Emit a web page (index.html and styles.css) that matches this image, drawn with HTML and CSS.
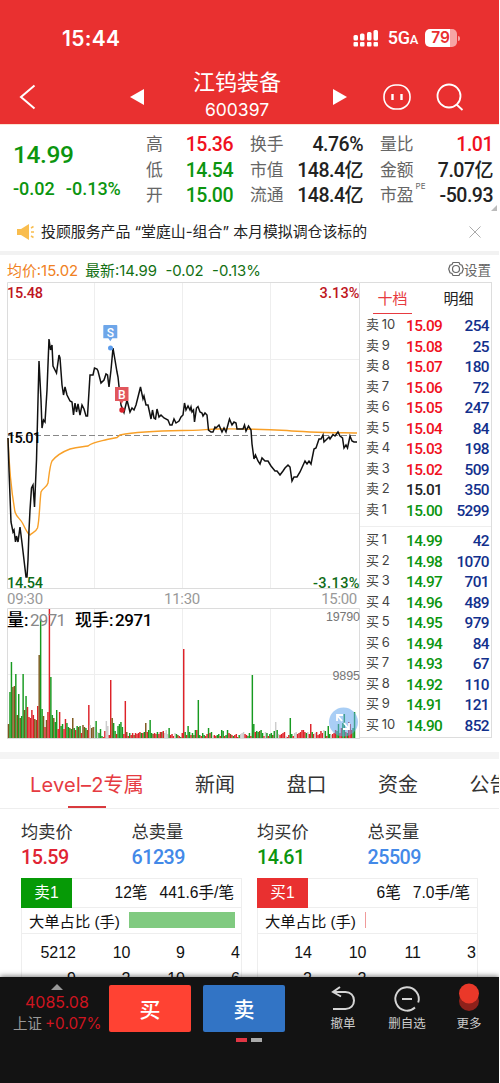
FILE: index.html
```html
<!DOCTYPE html>
<html lang="zh-CN">
<head>
  <meta charset="UTF-8">
  <meta name="viewport" content="width=device-width, initial-scale=1.0">
  <title>江钨装备 600397</title>
  <link rel="stylesheet" href="styles.css">
</head>
<body>
  <div class="app">
    <header class="header">
      <div class="status-bar">
        <span class="clock">15:44</span>
        <div class="status-icons">
          <svg width="26" height="18" viewBox="0 0 26 18" fill="#fff">
            <rect x="0.500" y="13" width="4.500" height="4.500" rx="1"/><rect x="7" y="13" width="4.500" height="4.500" rx="1"/>
            <rect x="14" y="13" width="4.500" height="4.500" rx="1"/><rect x="20.500" y="13" width="4.500" height="4.500" rx="1"/>
            <rect x="0.500" y="6" width="4.500" height="5.500" rx="1.5"/><rect x="7" y="4.500" width="4.500" height="7" rx="1.5"/>
            <rect x="14" y="3" width="4.500" height="8.500" rx="1.5"/><rect x="20.500" y="1" width="4.500" height="10.500" rx="1.5"/>
          </svg>
          <span class="network">5G<small>A</small></span>
          <span class="battery">79</span>
          <i class="battery-cap"></i>
        </div>
      </div>
      <div class="nav">
        <svg class="back" width="18" height="26" viewBox="0 0 18 26"><path d="M15.500 1.500 2 13l13.500 11.500" fill="none" stroke="#fff" stroke-width="2"/></svg>
        <svg class="prev" width="14" height="16" viewBox="0 0 14 16"><path d="M14 0v16L0 8z" fill="#fff"/></svg>
        <div class="stock">
          <h1>江钨装备</h1>
          <p>600397</p>
        </div>
        <svg class="next" width="14" height="16" viewBox="0 0 14 16"><path d="M0 0v16l14-8z" fill="#fff"/></svg>
        <svg class="robot" width="28" height="26" viewBox="0 0 28 26" fill="none" stroke="#fff">
          <rect x="1" y="1" width="26" height="24" rx="11.500" stroke-width="1.600"/>
          <path d="M9.500 10v6M18.500 10v6" stroke-width="2.400"/>
        </svg>
        <svg class="search" width="28" height="28" viewBox="0 0 28 28" fill="none" stroke="#fff" stroke-width="1.800">
          <circle cx="13" cy="13" r="11.500"/><path d="m20.500 21.500 6 5.500"/>
        </svg>
      </div>
    </header>

    <section class="quote">
      <div class="price">
        <strong>14.99</strong>
        <p><span>-0.02</span><span>-0.13%</span></p>
      </div>
      <dl class="col col-1">
        <div><dt>高</dt><dd class="red">15.36</dd></div>
        <div><dt>低</dt><dd class="green">14.54</dd></div>
        <div><dt>开</dt><dd class="green">15.00</dd></div>
      </dl>
      <dl class="col col-2">
        <div><dt>换手</dt><dd>4.76%</dd></div>
        <div><dt>市值</dt><dd>148.4<i>亿</i></dd></div>
        <div><dt>流通</dt><dd>148.4<i>亿</i></dd></div>
      </dl>
      <dl class="col col-3">
        <div><dt>量比</dt><dd class="red">1.01</dd></div>
        <div><dt>金额</dt><dd>7.07<i>亿</i></dd></div>
        <div><dt>市盈<sup>PE</sup></dt><dd>-50.93</dd></div>
      </dl>
      <span class="corner"></span>
    </section>

    <section class="notice">
      <svg width="18" height="16" viewBox="0 0 18 16">
        <path d="M0 5h4l8-5v16l-8-5H0z" fill="#f9bd4e"/>
        <path d="m14 4 2.500-1.500M14 8h3M14 12l2.500 1.500" stroke="#f9bd4e" stroke-width="1.500"/>
      </svg>
      <p>投顾服务产品 “堂庭山-组合” 本月模拟调仓该标的</p>
      <svg class="close" width="12" height="12" viewBox="0 0 12 12"><path d="m.5.5 11 11m0-11-11 11" stroke="#aaa"/></svg>
    </section>

    <div class="legend">
      <span class="avg">均价:15.02</span>
      <span class="last">最新:14.99&nbsp; -0.02&nbsp; -0.13%</span>
      <span class="setting">
        <svg width="16" height="16" viewBox="0 0 16 16" fill="none" stroke="#666" stroke-width="1.200">
          <path d="M5 1.500h6l1 2 2 .8L15.300 8 14 11.700l-2 .8-1 2H5l-1-2-2-.8L.7 8 2 4.300l2-.8z"/><circle cx="8" cy="8" r="3.500"/>
        </svg>设置
      </span>
    </div>

    <section class="market">
      <div class="charts">
        <svg class="price-chart" width="354" height="306" viewBox="6 282 354 306">
          <path class="frame" d="M7.500 588V282.500h352V588M7 588.500h353"/>
          <path class="grid" d="M94.500 283v305M182.500 283v305M270.500 283v305M8 359.500h351M8 513.500h351"/>
          <path class="middle" d="M8 435.500h351"/>
          <path class="avg-line" d="M8 438C9 465 12 495 15 512c2 6 5 6 8 12 3 6 4 9 7 11 2-2 6-3 7.500-7 2-8 2-24 3.500-36 2-5 5-3 7-9 1.500-12 2-18 4-22 4-5 10-9 18-12 8-2 12-2 18-3 5-4 14-5 19-6.500l10-2 3-2.500c10-2 30-4 62-4.500 15 0 23-1 35-1.500 30-.5 50 .5 70 1.500 20 2 40 2 70 2.500"/>
          <polyline class="price-line" points="8,438 9,470 11,522 13,532 14,530 15.500,542 16.500,536 18,542 20,527 22,543 24,560 26,577 27,577 28,560 29,530 30,510 31.500,488 33,485 34.500,507 36.500,460 38,400 39,361 41,400 42,428 43.500,420 45,422 47,390 49,339 50.500,350 52,345 53,366 56.500,373 59,355 60,358 62,385 63.500,395 65,387 67,395 70,401 72,402 73.500,415 75,403 76.500,412 78,404 80,415 82,405 84,409 86,416 87.500,416 90,375 93,375 94.500,368 97,369 98,371 101,383 104,380 106,374 107.500,375 109,387 111,370 113,348 115,360 117,372 118,377 121,405 124,412.500 127,400 130,412 132,408 134,410 136,405 138,397 140.500,387 143,399 144,396 146,405 148,405 151,419 152.500,410 154,418 155.500,419 157,409 159,417 161,415 164,418 168,420 170,425 172,425 174,419 176,423 179,421 181,417 183,415 184.500,403 186,410 188,406 190,410 191,407 192,412 193.500,410 194.500,422 196.500,408 198,406.500 200,412 202,413 203,416 205,413 207,415 208.500,430 211,432 213,432 215,427 216,428 219,425 222,432 224,428 226,432 229.500,419 232,425 234,422 236,423 237,429 243,429 244.500,425 246,431 248.500,426 251,430 252,444 254,459 255.500,455 258,461 260,464 262,458 265,461 268,461 271,466 275,471 277,471 280,475 283,471 285,468 288,465 290,467 292,481 294,477 297,477 300,472 305,461 307,464 309,461 311,464 314,449 316,448 319,439 321,439 323,435 324,442 327,439 329,437 330,439 333,434.500 335,436 338,432 340,436 342.500,438 344,448 346,445 347.500,448 350,436 352,441 354,442 357,442"/>
          <text class="label red-dark" x="7" y="297.500" textLength="36">15.48</text>
          <text class="label red-dark" x="319.500" y="297.500" textLength="40">3.13%</text>
          <text class="label" x="7" y="442.500" textLength="34">15.01</text>
          <text class="label green-dark" x="7" y="587.500" textLength="36">14.54</text>
          <text class="label green-dark" x="313" y="587.500" textLength="46.500">-3.13%</text>
          <!-- trade markers -->
          <path d="M104 325h12.500q.8 0 .8.8v12.500h-5l-2 3-2-3h-5v-12.500q0-.8.7-.8z" fill="#6ea6e9"/>
          <text class="mark" x="110.300" y="336.500">S</text>
          <circle cx="110.500" cy="348" r="2.500" fill="#5b9cec"/>
          <path d="M115 387h13.500v14h-5l-2 3-2-3H115z" fill="#e1565c"/>
          <text class="mark" x="121.800" y="398.500">B</text>
          <circle cx="122" cy="410" r="2.700" fill="#d9222c"/>
        </svg>
        <div class="times"><span>09:30</span><span>11:30</span><span>15:00</span></div>
        <svg class="volume-chart" width="354" height="131" viewBox="6 608 354 131">
          <path class="frame" d="M7.500 738V608.500h352V738M7 738.500h353"/>
          <path class="grid" d="M94.500 609v129M182.500 609v129M270.500 609v129M8 674.500h351"/>
          <g id="volumeBars"></g>
          <text class="vol-text" x="7" y="626">量:</text>
          <text class="vol-text vol-gray" x="30" y="626" textLength="36">2971</text>
          <text class="vol-text" x="75" y="626">现手:</text>
          <text class="vol-text" x="115" y="626" textLength="37.500">2971</text>
          <text class="scale" x="326" y="621" textLength="34">19790</text>
          <text class="scale" x="332.500" y="680" textLength="27.500">9895</text>
          <circle cx="343.500" cy="722" r="14.500" fill="#62a5ed" opacity=".55"/>
          <path d="M342 721l-5-6m0 6v-6h6M344 723l5 6m0-6v6h-6" fill="none" stroke="#fff" stroke-width="1.800"/>
        </svg>
      </div>
      <div class="book">
        <div class="book-tabs"><span class="active">十档</span><span>明细</span></div>
        <div class="levels" id="sells"></div>
        <div class="levels buys" id="buys"></div>
      </div>
    </section>

    <nav class="tabs">
      <span class="active">Level–2专属</span>
      <span>新闻</span>
      <span>盘口</span>
      <span>资金</span>
      <span>公告</span>
    </nav>

    <main class="level2">
      <div class="side">
        <div class="totals">
          <div><p>均卖价</p><b class="crimson">15.59</b></div>
          <div><p>总卖量</p><b class="blue">61239</b></div>
        </div>
        <div class="card">
          <div class="card-head"><span class="tag tag-sell">卖1</span><span>12笔</span><span class="per">441.6手/笔</span></div>
          <div class="ratio">大单占比 (手)<i class="bar bar-sell"></i></div>
          <div class="queue">
            <span>5212</span><span>10</span><span>9</span><span>4</span>
            <span>9</span><span>2</span><span>10</span><span>6</span>
          </div>
        </div>
      </div>
      <div class="side">
        <div class="totals">
          <div><p>均买价</p><b class="green">14.61</b></div>
          <div><p>总买量</p><b class="blue">25509</b></div>
        </div>
        <div class="card">
          <div class="card-head"><span class="tag tag-buy">买1</span><span>6笔</span><span class="per">7.0手/笔</span></div>
          <div class="ratio">大单占比 (手)<i class="bar bar-buy"></i></div>
          <div class="queue">
            <span>14</span><span>10</span><span>11</span><span>3</span>
            <span>2</span><span>2</span>
          </div>
        </div>
      </div>
    </main>

    <footer class="footer">
      <div class="index">
        <i class="caret"></i>
        <p class="point">4085.08</p>
        <p><span>上证</span>+0.07%</p>
      </div>
      <div class="trade">
        <div class="buttons"><button class="btn btn-buy">买</button><button class="btn btn-sell">卖</button></div>
        <div class="pager"><i></i><i></i></div>
      </div>
      <div class="action cancel">
        <svg width="26" height="26" viewBox="0 0 26 26" fill="none" stroke="#d5d5d5" stroke-width="2"><path d="M10 1 3 6l8 4.500M3 6h12.500c5 0 8.500 3.500 8.500 8.500S20.500 23 15.500 23H3"/></svg>
        <span>撤单</span>
      </div>
      <div class="action remove">
        <svg width="26" height="26" viewBox="0 0 26 26" fill="none" stroke="#d5d5d5" stroke-width="1.900"><path d="M21 21.500A11.700 11.700 0 1 1 24.200 16.500M21 21.500A11.700 11.700 0 0 1 13 24.700M8 13h10"/></svg>
        <span>删自选</span>
      </div>
      <div class="action more">
        <svg width="22" height="28" viewBox="0 0 22 28"><circle cx="11" cy="18" r="10" fill="#8e211b"/><circle cx="11" cy="10.500" r="10" fill="#ea3829"/></svg>
        <span>更多</span>
      </div>
    </footer>
  </div>
  <script src="script.js"></script>
</body>
</html>
```
FILE: styles.css
```css
* {
  box-sizing: border-box;
}

body {
  margin: 0;
  background: #fff;
  color: #222;
  font-family: Inter, 'Noto Sans CJK SC', sans-serif;
}

h1, p, dl, dd {
  margin: 0;
}

i {
  font-style: normal;
}

svg {
  display: block;
  flex: none;
  overflow: visible;
}

.app {
  width: 499px;
  height: 1083px;
  display: flex;
  flex-direction: column;
  overflow: hidden;
}

.app > * {
  flex: none;
}

.red { color: #f0101e; }
.green { color: #0b950f; }
.crimson { color: #e02433; }
.blue { color: #4389e8; }

/* header */
.header {
  height: 125px;
  background: #e93030;
  color: #fff;
  border-bottom: 1px solid #fbe3d3;
}

.status-bar {
  height: 70px;
  padding: 6px 39px 0 62px;
  display: flex;
  align-items: center;
  justify-content: space-between;
}

.clock {
  font-size: 21px;
  font-weight: 600;
  letter-spacing: 0.3px;
}

.status-icons {
  display: flex;
  align-items: center;
}

.network {
  margin: 2px 7px 0 9px;
  font: 500 18px/18px Roboto, sans-serif;
  letter-spacing: -0.3px;
}

.network small {
  font-size: 13px;
}

.battery {
  width: 32px;
  height: 18px;
  padding-right: 1px;
  border-radius: 5px;
  background: linear-gradient(90deg, #fff 79%, #f6a4a4 79%);
  color: #e93030;
  font-size: 15.500px;
  font-weight: 600;
  line-height: 18px;
  text-align: center;
}

.battery-cap {
  width: 2px;
  height: 5px;
  margin-left: 1px;
  border-radius: 0 2px 2px 0;
  background: #f6a4a4;
}

.nav {
  display: flex;
  align-items: center;
  height: 54px;
  padding: 0 35px 0 19px;
}

.prev {
  margin-left: 93px;
}

.stock {
  width: 189px;
  padding: 0 14px 5px 11px;
  text-align: center;
}

.stock h1 {
  font-size: 22px;
  font-weight: 400;
  line-height: 28px;
}

.stock p {
  padding-top: 3px;
  font-size: 17.500px;
  line-height: 22px;
}

.robot {
  margin-left: 36px;
}

.search {
  margin-left: 25px;
}

/* quote */
.quote {
  position: relative;
  height: 88px;
  padding: 7px 6px 0 13px;
  display: flex;
  background: #fff;
}

.price {
  width: 133px;
  color: #0b950f;
  font-family: Roboto, sans-serif;
  font-weight: 500;
}

.price strong {
  display: block;
  padding-top: 8px;
  font-size: 24.500px;
  font-weight: 500;
  line-height: 30px;
  letter-spacing: -0.4px;
}

.price p {
  display: flex;
  gap: 11px;
  padding-top: 10px;
  font-size: 18px;
  line-height: 18px;
}

.col > div {
  display: flex;
  justify-content: space-between;
  height: 25.500px;
  line-height: 25px;
}

.col dt {
  color: #666;
  font-size: 16.800px;
  white-space: nowrap;
}

.col dt sup {
  font-size: 8px;
  line-height: 0;
  position: relative;
  top: -5px;
  left: 2px;
}

.col dd {
  font: 500 19.500px/26px Roboto, 'Noto Sans CJK SC', sans-serif;
  letter-spacing: -0.5px;
  white-space: nowrap;
}

.col dd i {
  font-size: 19px;
}

.col-1 { width: 87px; }
.col-2 { width: 113px; margin-left: 17px; }
.col-3 { width: 113px; margin-left: 17px; }

.corner {
  position: absolute;
  right: 2px;
  bottom: 2px;
  border-left: 6px solid transparent;
  border-bottom: 6px solid #bbb;
}

/* notice */
.notice {
  height: 38px;
  display: flex;
  align-items: center;
  padding: 0 18px 0 17px;
}

.notice p {
  flex: 1;
  margin-left: 6px;
  font-size: 14.900px;
  line-height: 20px;
  white-space: nowrap;
}

/* legend */
.legend {
  height: 31px;
  border-top: 4px solid #f2f2f2;
  display: flex;
  align-items: center;
  padding: 1px 8px 0 7px;
  font-size: 14.900px;
  white-space: nowrap;
}

.avg { color: #f08122; }
.last { color: #147014; margin-left: 7px; }

.setting {
  margin-left: auto;
  display: flex;
  align-items: center;
  color: #666;
  font-size: 13.500px;
}

/* charts */
.market {
  height: 470px;
  display: flex;
  padding-left: 6px;
}

.charts {
  width: 354px;
}

.frame {
  fill: none;
  stroke: #dcdcdc;
}

.grid {
  stroke: #eee;
}

.middle {
  stroke: #888;
  stroke-dasharray: 6 3;
}

.avg-line {
  fill: none;
  stroke: #f8a028;
  stroke-width: 1.4;
}

.price-line {
  fill: none;
  stroke: #111;
  stroke-width: 1.5;
}

.label {
  font: 500 14.500px Roboto, sans-serif;
}

.red-dark { fill: #be1522; }
.green-dark { fill: #0f6c17; }

.mark {
  fill: #fff;
  font: 500 12px Roboto, sans-serif;
  text-anchor: middle;
}

.times {
  height: 20px;
  display: flex;
  justify-content: space-between;
  padding: 0 3px 0 1px;
  color: #999;
  font: 15px/23px Roboto, sans-serif;
  letter-spacing: -0.3px;
}

.vol-text {
  font: 500 17px Roboto, 'Noto Sans CJK SC', sans-serif;
}

.vol-gray {
  fill: #888;
  font-weight: 400;
}

.scale {
  fill: #777;
  font: 12.500px 'Liberation Sans', sans-serif;
}

/* order book */
.book {
  width: 132px;
  height: 456px;
  border: 1px solid #ddd;
  border-left: 0;
}

.book-tabs {
  display: flex;
  justify-content: space-between;
  padding: 0 13px;
  height: 31px;
  font-size: 15px;
  line-height: 32px;
}

.book-tabs span {
  width: 39px;
  text-align: center;
}

.book-tabs .active {
  color: #e73a40;
  border-bottom: 1px solid #e73a40;
}

.levels {
  height: 212px;
  padding-top: 1px;
}

.buys {
  border-top: 1px solid #eee;
  padding-top: 3px;
}

.level {
  height: 20.550px;
  display: flex;
  padding: 0 2px 0 6px;
  font: 500 15.400px/22px Roboto, sans-serif;
  letter-spacing: -0.6px;
}

.level .name {
  width: 40px;
  color: #444;
  font: 13px/19px Inter, 'Noto Sans CJK SC', sans-serif;
  letter-spacing: 0;
  word-spacing: -1px;
}

.level .amount {
  flex: 1;
  color: #12308c;
  text-align: right;
}

/* tabs */
.tabs {
  height: 57px;
  border-top: 7px solid #f4f4f4;
  border-bottom: 1px solid #eee;
  display: flex;
  gap: 51.500px;
  padding-left: 30px;
  font-size: 20px;
  line-height: 52px;
  color: #333;
  white-space: nowrap;
  overflow: hidden;
}

.tabs span {
  flex: none;
}

.tabs .active {
  color: #e63b42;
  width: 113.500px;
  letter-spacing: 0.2px;
  background: linear-gradient(#d93a3e, #d93a3e) center bottom / 38px 2px no-repeat;
}

/* level 2 */
.level2 {
  flex: 1 1 0 !important;
  min-height: 0;
  overflow: hidden;
  display: flex;
  gap: 15px;
  padding-left: 21px;
}

.side {
  width: 221px;
}

.totals {
  height: 69px;
  display: flex;
  padding-top: 9px;
}

.totals div {
  width: 111px;
}

.totals p {
  font-size: 17.200px;
  line-height: 27px;
  color: #333;
}

.totals b {
  display: block;
  font: 500 19.700px/26px Roboto, sans-serif;
  letter-spacing: -0.5px;
}

.card {
  border: 1px solid #eee;
  height: 130px;
  color: #111;
  font-family: 'Liberation Sans', 'Noto Sans CJK SC', sans-serif;
}

.card-head {
  display: flex;
  height: 29px;
  padding-right: 7px;
  border-bottom: 1px solid #eee;
  font-size: 15.600px;
  line-height: 27px;
}

.card-head .tag {
  width: 51px;
  margin: -1px auto 0 -1px;
  line-height: 29px;
  height: 30px;
  color: #fff;
  text-align: center;
}

.tag-sell { background: #069a06; }
.tag-buy { background: #e93030; }

.per {
  margin-left: 12px;
}

.ratio {
  height: 26px;
  padding: 0 0 2px 7px;
  display: flex;
  align-items: center;
  border-bottom: 1px solid #eee;
  font-size: 15.300px;
  white-space: nowrap;
}

.bar {
  height: 16px;
  margin-left: 9px;
}

.bar-sell {
  width: 106px;
  background: #80ca80;
}

.bar-buy {
  width: 1px;
  background: #f09a9a;
}

.queue {
  display: grid;
  grid-template-columns: 54px 54.500px 54.500px 55px;
  grid-auto-rows: 25.500px;
  padding-top: 6px;
  font-size: 16px;
  line-height: 26px;
  text-align: right;
}

/* footer */
.footer {
  height: 106px;
  background: #131313;
  box-shadow: 0 -1px 5px rgba(0, 0, 0, 0.5);
  position: relative;
  display: flex;
  color: #ccc;
}

.index {
  width: 109px;
  padding: 7px 0 0 13px;
  color: #ce1520;
  font-size: 15.300px;
  line-height: 22px;
  white-space: nowrap;
}

.index span {
  color: #999;
  font-size: 14.500px;
  margin-right: 3px;
}

.index .point {
  padding: 1px 0 0 12px;
  font-size: 16px;
}

.caret {
  display: block;
  width: 12px;
  margin-left: 38px;
  border: 6px solid transparent;
  border-top: 0;
  border-bottom-color: #999;
}

.trade {
  width: 176px;
  padding-top: 8px;
}

.buttons {
  display: flex;
  gap: 12px;
}

.btn {
  width: 82px;
  height: 47px;
  padding: 0;
  border: none;
  border-radius: 2px;
  color: #fff;
  font: 500 21px/47px 'Noto Sans CJK SC', sans-serif;
}

.btn-buy { background: #ff4233; }
.btn-sell { background: #3274c5; }

.pager {
  display: flex;
  gap: 4px;
  padding: 6px 0 0 127px;
}

.pager i {
  width: 11px;
  height: 4px;
  background: #e13644;
}

.pager i + i {
  background: #aaa;
}

.action {
  display: flex;
  flex-direction: column;
  align-items: center;
  width: 64px;
  padding-top: 9px;
  font-size: 12.500px;
  line-height: 20px;
}

.action span {
  margin-top: 2px;
}

.cancel { margin-left: 26px; }

.more {
  width: 60px;
  padding-top: 6px;
}

.more span {
  margin-top: 3px;
}
```
FILE: script.js
```js
// 十档行情: [价格, 手数]
const sells = [
  ['15.09', 254], ['15.08', 25], ['15.07', 180], ['15.06', 72], ['15.05', 247],
  ['15.04', 84], ['15.03', 198], ['15.02', 509], ['15.01', 350], ['15.00', 5299]
];
const buys = [
  ['14.99', 42], ['14.98', 1070], ['14.97', 701], ['14.96', 489], ['14.95', 979],
  ['14.94', 84], ['14.93', 67], ['14.92', 110], ['14.91', 121], ['14.90', 852]
];
const prevClose = 15.01;

function levelRow(name, price, amount) {
  const color = price > prevClose ? 'red' : price < prevClose ? 'green' : '';
  return `<div class="level"><span class="name">${name}</span><span class="${color}">${price}</span><span class="amount">${amount}</span></div>`;
}

document.getElementById('sells').innerHTML =
  sells.map(([p, n], i) => levelRow('卖 ' + (10 - i), p, n)).join('');
document.getElementById('buys').innerHTML =
  buys.map(([p, n], i) => levelRow('买 ' + (i + 1), p, n)).join('');

// 每分钟成交量, r 涨 g 跌 b 混合 w 平
const volumes = `14b 46g 76g 51b 52b 64g 23b 44g 20b 22g 64g 28b 42g 31r 21r 20r 28r 23r 19b 18b
32r 83b 119g 29g 22b 11r 18b 26r 129r 61g 23g 20b 16g 28g 9r 26r 12g 14g 9r 19r
15g 11g 10b 9g 20b 10g 8r 12g 11b 12g 5r 13b 11b 10g 8b 33r 13w 10b 11b 11w
17g 6w 5g 9g 2g 1r 7r 17w 12w 3r 58r 20b 15g 7g 4r 12g 14g 16g 11g 4r
37r 6b 2r 5g 3r 5r 3b 5r 4r 5r 6r 5g 5r 6g 15b 6r 8g 18g 5g 4b
5r 4r 6g 4r 6r 6b 7r 5w 8w 4w 10g 3r 4r 2r 5w 4g 3b 2r 1g 5r
89r 6g 3r 12g 6g 3r 5g 3b 8g 8r 38g 3g 2r 5g 3g 2r 4r 10g 5r 6g
2w 3r 2r 3g 4g 2r 8g 7g 2r 3g 8g 5r 4b 3r 2g 3r 4r 1r 3g 4w
5w 6w 4r 3r 2g 5g 2r 63g 14g 6r 7g 6g 7b 8g 5g 2r 6w 5g 2r 4g
5g 3b 7g 16w 8g 4w 3r 4r 5r 6r 2w 1r 3r 20g 4g 2r 5w 6w 4r 5r
6r 8r 8r 6r 5g 6w 4r 14r 6g 4r 5w 6r 3r 4r 7r 5r 8w 7g 2r 12g
4g 3w 4r 5r 8r 7g 14g 5r 10r 15g 24g 6r 5g 16r 14r 8r 10g 26g 0w 0w`.split(/\s+/);
const colors = { r: '#dd2229', g: '#179a20', b: '#7d571c', w: '#ccc' };

document.getElementById('volumeBars').innerHTML = volumes.map((v, i) => {
  const h = parseInt(v);
  return `<rect x="${(7.8 + i * 1.46).toFixed(2)}" y="${738 - h}" width="1.45" height="${h}" fill="${colors[v.slice(-1)]}"/>`;
}).join('');
```
